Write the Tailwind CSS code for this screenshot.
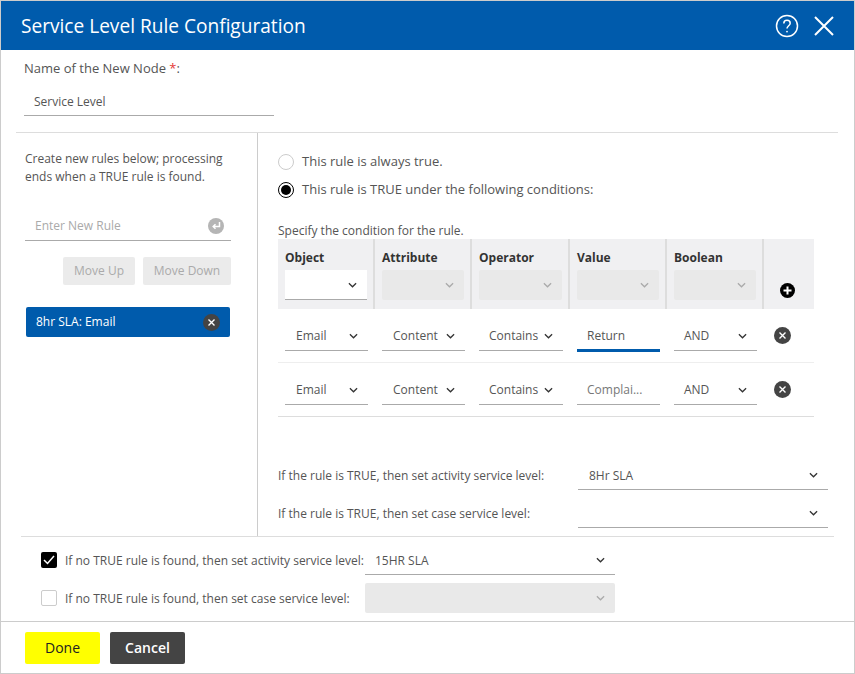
<!DOCTYPE html>
<html lang="en">

<head>
    <meta charset="UTF-8">
    <meta name="viewport" content="width=device-width, initial-scale=1.0">
    <script src="https://cdn.jsdelivr.net/npm/@tailwindcss/browser@4"></script>
    <title>Service Level Rule Configuration</title>
</head>

<body class="bg-white font-['Open_Sans',sans-serif] text-[12px] text-[#555]">
    <div class="w-[855px] h-[674px] border border-[#ccc] flex flex-col overflow-hidden">

        <!-- Header -->
        <header class="h-[49px] shrink-0 bg-[#005bac] flex items-center justify-between pl-[20px] pr-[20px] text-white">
            <h1 class="text-[19.1px] leading-[26px]">Service Level Rule Configuration</h1>
            <div class="flex items-center gap-[15px]">
                <svg width="24" height="24" viewBox="0 0 24 24" fill="none" stroke="white" stroke-width="1.5">
                    <circle cx="12" cy="12" r="10.5" />
                    <path d="M8.8 9.500c0-2 1.400-3.200 3.200-3.200s3.200 1.200 3.200 2.900c0 2.500-3.200 2.600-3.200 5.300" />
                    <circle cx="12" cy="17.600" r="0.9" fill="white" stroke="none" />
                </svg>
                <svg width="20" height="20" viewBox="0 0 20 20" fill="none" stroke="white" stroke-width="2">
                    <path d="M1 1l18 18M19 1L1 19" />
                </svg>
            </div>
        </header>

        <!-- Node name -->
        <div class="h-[82px] shrink-0 pl-[23px] pt-[9px]">
            <label class="block text-[13px] leading-[18px]">Name of the New Node <span class="text-[#e53935]">*</span>:</label>
            <div class="mt-[9px] w-[250px] h-[30px] border-b border-[#aaa] pl-[10px] leading-[31px]">Service Level</div>
        </div>

        <!-- Rules -->
        <div class="h-[404px] shrink-0 ml-[15px] mr-[16px] border-t border-[#ddd] flex">
            <div class="w-[242px] shrink-0 border-r border-[#ccc] pl-[9px] pr-[26px]">
                <p class="mt-[17px] leading-[18px]">Create new rules below; processing ends when a TRUE rule is found.</p>
                <div class="mt-[20px] h-[35px] border-b border-[#aaa] pl-[10px] pr-[7px] pt-[5px] flex items-center justify-between text-[#aaa]">
                    <span>Enter New Rule</span>
                    <svg width="16" height="16" viewBox="0 0 16 16">
                        <circle cx="8" cy="8" r="8" fill="#b5b5b5" />
                        <path d="M11.500 4v4.500H5.500M7.500 6.300L5.200 8.500l2.300 2.200" fill="none" stroke="white" stroke-width="1.5" />
                    </svg>
                </div>
                <div class="mt-[16px] flex justify-end gap-[8px]">
                    <button class="w-[72px] h-[28px] rounded-[2px] bg-[#ebebeb] text-[#aaa]">Move Up</button>
                    <button class="w-[88px] h-[28px] rounded-[2px] bg-[#ebebeb] text-[#aaa]">Move Down</button>
                </div>
                <div class="mt-[22px] ml-[1px] mr-[1px] h-[30px] rounded-[2px] bg-[#005bac] text-white font-medium flex items-center justify-between pl-[10px] pr-[10px]">
                    <span>8hr SLA: Email</span>
                    <svg width="17" height="17" viewBox="0 0 17 17">
                        <circle cx="8.500" cy="8.500" r="8.500" fill="#444" />
                        <path d="M5.500 5.500l6 6M11.500 5.500l-6 6" stroke="white" stroke-width="1.4" />
                    </svg>
                </div>
            </div>

            <div class="flex-1 pl-[20px]">
                <div class="mt-[21px] flex items-center gap-[8px] h-[16px] text-[13px]">
                    <span class="w-[16px] h-[16px] rounded-full border border-[#ccc]"></span>
                    <span>This rule is always true.</span>
                </div>
                <div class="mt-[12px] flex items-center gap-[8px] h-[16px] text-[13px]">
                    <span class="w-[16px] h-[16px] rounded-full border border-black flex items-center justify-center">
                        <span class="w-[10px] h-[10px] rounded-full bg-black"></span>
                    </span>
                    <span>This rule is TRUE under the following conditions:</span>
                </div>
                <p class="mt-[24px] leading-[17px]">Specify the condition for the rule.</p>

                <!-- Condition table -->
                <div class="w-[536px] h-[70px] bg-[#f0f0f2] grid grid-cols-[97px_97px_98px_97px_97px_50px] text-[#333] font-bold">
                    <div class="border-r-2 border-[#ddd] pl-[7px] pt-[10px]">
                        <div class="leading-[18px]">Object</div>
                        <div class="mt-[3px] w-[82px] h-[30px] bg-white border-b border-[#aaa] flex items-center justify-end pr-[10px]">
                            <svg width="9" height="6" viewBox="0 0 10 6" fill="none" stroke="#333" stroke-width="1.4"><path d="M1 1l4 4 4-4" /></svg>
                        </div>
                    </div>
                    <div class="border-r-2 border-[#ddd] pl-[7px] pt-[10px]">
                        <div class="leading-[18px]">Attribute</div>
                        <div class="mt-[3px] w-[82px] h-[30px] bg-[#e9e9e9] rounded-[2px] flex items-center justify-end pr-[10px]">
                            <svg width="9" height="6" viewBox="0 0 10 6" fill="none" stroke="#aaa" stroke-width="1.4"><path d="M1 1l4 4 4-4" /></svg>
                        </div>
                    </div>
                    <div class="border-r-2 border-[#ddd] pl-[7px] pt-[10px]">
                        <div class="leading-[18px]">Operator</div>
                        <div class="mt-[3px] w-[83px] h-[30px] bg-[#e9e9e9] rounded-[2px] flex items-center justify-end pr-[10px]">
                            <svg width="9" height="6" viewBox="0 0 10 6" fill="none" stroke="#aaa" stroke-width="1.4"><path d="M1 1l4 4 4-4" /></svg>
                        </div>
                    </div>
                    <div class="border-r-2 border-[#ddd] pl-[7px] pt-[10px]">
                        <div class="leading-[18px]">Value</div>
                        <div class="mt-[3px] w-[82px] h-[30px] bg-[#e9e9e9] rounded-[2px] flex items-center justify-end pr-[10px]">
                            <svg width="9" height="6" viewBox="0 0 10 6" fill="none" stroke="#aaa" stroke-width="1.4"><path d="M1 1l4 4 4-4" /></svg>
                        </div>
                    </div>
                    <div class="border-r-2 border-[#ddd] pl-[7px] pt-[10px]">
                        <div class="leading-[18px]">Boolean</div>
                        <div class="mt-[3px] w-[82px] h-[30px] bg-[#e9e9e9] rounded-[2px] flex items-center justify-end pr-[10px]">
                            <svg width="9" height="6" viewBox="0 0 10 6" fill="none" stroke="#aaa" stroke-width="1.4"><path d="M1 1l4 4 4-4" /></svg>
                        </div>
                    </div>
                    <div class="pl-[16px] pt-[44px]">
                        <svg width="15" height="15" viewBox="0 0 15 15">
                            <circle cx="7.500" cy="7.500" r="7.500" fill="#000" />
                            <path d="M7.500 3.500v8M3.500 7.500h8" stroke="white" stroke-width="2" />
                        </svg>
                    </div>
                </div>

                <!-- Row 1 -->
                <div class="w-[536px] h-[54px] border-b border-[#eee] grid grid-cols-[97px_97px_98px_97px_97px_50px] text-[#555]">
                    <div class="pl-[7px] pt-[12px]">
                        <div class="w-[83px] h-[30px] border-b border-[#aaa] pl-[11px] pr-[10px] flex items-center justify-between">
                            <span>Email</span>
                            <svg width="9" height="6" viewBox="0 0 10 6" fill="none" stroke="#333" stroke-width="1.4"><path d="M1 1l4 4 4-4" /></svg>
                        </div>
                    </div>
                    <div class="pl-[7px] pt-[12px]">
                        <div class="w-[83px] h-[30px] border-b border-[#aaa] pl-[11px] pr-[10px] flex items-center justify-between">
                            <span>Content</span>
                            <svg width="9" height="6" viewBox="0 0 10 6" fill="none" stroke="#333" stroke-width="1.4"><path d="M1 1l4 4 4-4" /></svg>
                        </div>
                    </div>
                    <div class="pl-[7px] pt-[12px]">
                        <div class="w-[84px] h-[30px] border-b border-[#aaa] pl-[10px] pr-[10px] flex items-center justify-between">
                            <span>Contains</span>
                            <svg width="9" height="6" viewBox="0 0 10 6" fill="none" stroke="#333" stroke-width="1.4"><path d="M1 1l4 4 4-4" /></svg>
                        </div>
                    </div>
                    <div class="pl-[7px] pt-[12px]">
                        <div class="w-[83px] h-[31px] border-b-[3px] border-[#005bac] pl-[10px] pt-[2px] flex items-center">Return</div>
                    </div>
                    <div class="pl-[7px] pt-[12px]">
                        <div class="w-[83px] h-[30px] border-b border-[#aaa] pl-[10px] pr-[10px] flex items-center justify-between">
                            <span>AND</span>
                            <svg width="9" height="6" viewBox="0 0 10 6" fill="none" stroke="#333" stroke-width="1.4"><path d="M1 1l4 4 4-4" /></svg>
                        </div>
                    </div>
                    <div class="pl-[10px] pt-[18px]">
                        <svg width="17" height="17" viewBox="0 0 17 17">
                            <circle cx="8.500" cy="8.500" r="8.500" fill="#444" />
                            <path d="M5.500 5.500l6 6M11.500 5.500l-6 6" stroke="white" stroke-width="1.4" />
                        </svg>
                    </div>
                </div>

                <!-- Row 2 -->
                <div class="w-[536px] h-[54px] border-b border-[#ddd] grid grid-cols-[97px_97px_98px_97px_97px_50px] text-[#555]">
                    <div class="pl-[7px] pt-[12px]">
                        <div class="w-[83px] h-[30px] border-b border-[#aaa] pl-[11px] pr-[10px] flex items-center justify-between">
                            <span>Email</span>
                            <svg width="9" height="6" viewBox="0 0 10 6" fill="none" stroke="#333" stroke-width="1.4"><path d="M1 1l4 4 4-4" /></svg>
                        </div>
                    </div>
                    <div class="pl-[7px] pt-[12px]">
                        <div class="w-[83px] h-[30px] border-b border-[#aaa] pl-[11px] pr-[10px] flex items-center justify-between">
                            <span>Content</span>
                            <svg width="9" height="6" viewBox="0 0 10 6" fill="none" stroke="#333" stroke-width="1.4"><path d="M1 1l4 4 4-4" /></svg>
                        </div>
                    </div>
                    <div class="pl-[7px] pt-[12px]">
                        <div class="w-[84px] h-[30px] border-b border-[#aaa] pl-[10px] pr-[10px] flex items-center justify-between">
                            <span>Contains</span>
                            <svg width="9" height="6" viewBox="0 0 10 6" fill="none" stroke="#333" stroke-width="1.4"><path d="M1 1l4 4 4-4" /></svg>
                        </div>
                    </div>
                    <div class="pl-[7px] pt-[12px]">
                        <div class="w-[83px] h-[30px] border-b border-[#aaa] pl-[10px] flex items-center text-[#777]">Complai...</div>
                    </div>
                    <div class="pl-[7px] pt-[12px]">
                        <div class="w-[83px] h-[30px] border-b border-[#aaa] pl-[10px] pr-[10px] flex items-center justify-between">
                            <span>AND</span>
                            <svg width="9" height="6" viewBox="0 0 10 6" fill="none" stroke="#333" stroke-width="1.4"><path d="M1 1l4 4 4-4" /></svg>
                        </div>
                    </div>
                    <div class="pl-[10px] pt-[18px]">
                        <svg width="17" height="17" viewBox="0 0 17 17">
                            <circle cx="8.500" cy="8.500" r="8.500" fill="#444" />
                            <path d="M5.500 5.500l6 6M11.500 5.500l-6 6" stroke="white" stroke-width="1.4" />
                        </svg>
                    </div>
                </div>

                <!-- Service level when TRUE -->
                <div class="mt-[43px] flex items-center h-[30px]">
                    <span class="w-[300px] shrink-0 pt-[2px]">If the rule is TRUE, then set activity service level:</span>
                    <div class="w-[250px] h-[30px] border-b border-[#aaa] pl-[11px] pr-[10px] flex items-center justify-between">
                        <span class="pt-[2px]">8Hr SLA</span>
                        <svg width="9" height="6" viewBox="0 0 10 6" fill="none" stroke="#333" stroke-width="1.4"><path d="M1 1l4 4 4-4" /></svg>
                    </div>
                </div>
                <div class="mt-[8px] flex items-center h-[30px]">
                    <span class="w-[300px] shrink-0 pt-[2px]">If the rule is TRUE, then set case service level:</span>
                    <div class="w-[250px] h-[30px] border-b border-[#aaa] pl-[11px] pr-[10px] flex items-center justify-end">
                        <svg width="9" height="6" viewBox="0 0 10 6" fill="none" stroke="#333" stroke-width="1.4"><path d="M1 1l4 4 4-4" /></svg>
                    </div>
                </div>
            </div>
        </div>

        <!-- Service level when nothing matches -->
        <div class="h-[85px] shrink-0 ml-[20px] mr-[20px] border-t border-[#ddd] pl-[20px]">
            <div class="mt-[8px] h-[30px] flex items-center">
                <span class="w-[16px] h-[16px] rounded-[2px] bg-black flex items-center justify-center">
                    <svg width="12" height="10" viewBox="0 0 12 10" fill="none" stroke="white" stroke-width="1.5"><path d="M1 5l3.500 3.500L11 1" /></svg>
                </span>
                <span class="ml-[8px] w-[300px] shrink-0 pt-[2px]">If no TRUE rule is found, then set activity service level:</span>
                <div class="w-[250px] h-[30px] border-b border-[#aaa] pl-[10px] pr-[10px] flex items-center justify-between">
                    <span class="pt-[2px]">15HR SLA</span>
                    <svg width="9" height="6" viewBox="0 0 10 6" fill="none" stroke="#333" stroke-width="1.4"><path d="M1 1l4 4 4-4" /></svg>
                </div>
            </div>
            <div class="mt-[8px] h-[30px] flex items-center">
                <span class="w-[16px] h-[16px] rounded-[2px] border border-[#ccc]"></span>
                <span class="ml-[8px] w-[300px] shrink-0 pt-[2px]">If no TRUE rule is found, then set case service level:</span>
                <div class="w-[250px] h-[30px] bg-[#e9e9e9] rounded-[2px] pr-[10px] flex items-center justify-end">
                    <svg width="9" height="6" viewBox="0 0 10 6" fill="none" stroke="#aaa" stroke-width="1.4"><path d="M1 1l4 4 4-4" /></svg>
                </div>
            </div>
        </div>

        <!-- Footer -->
        <footer class="flex-1 border-t border-[#ccc] pl-[24px] pt-[10px] flex items-start gap-[10px] text-[14px]">
            <button class="w-[75px] h-[32px] pb-[2px] rounded-[2px] bg-[#ffff00] text-[#222] font-medium">Done</button>
            <button class="w-[75px] h-[32px] pb-[2px] rounded-[2px] bg-[#444] text-white font-semibold">Cancel</button>
        </footer>
    </div>
</body>

</html>
